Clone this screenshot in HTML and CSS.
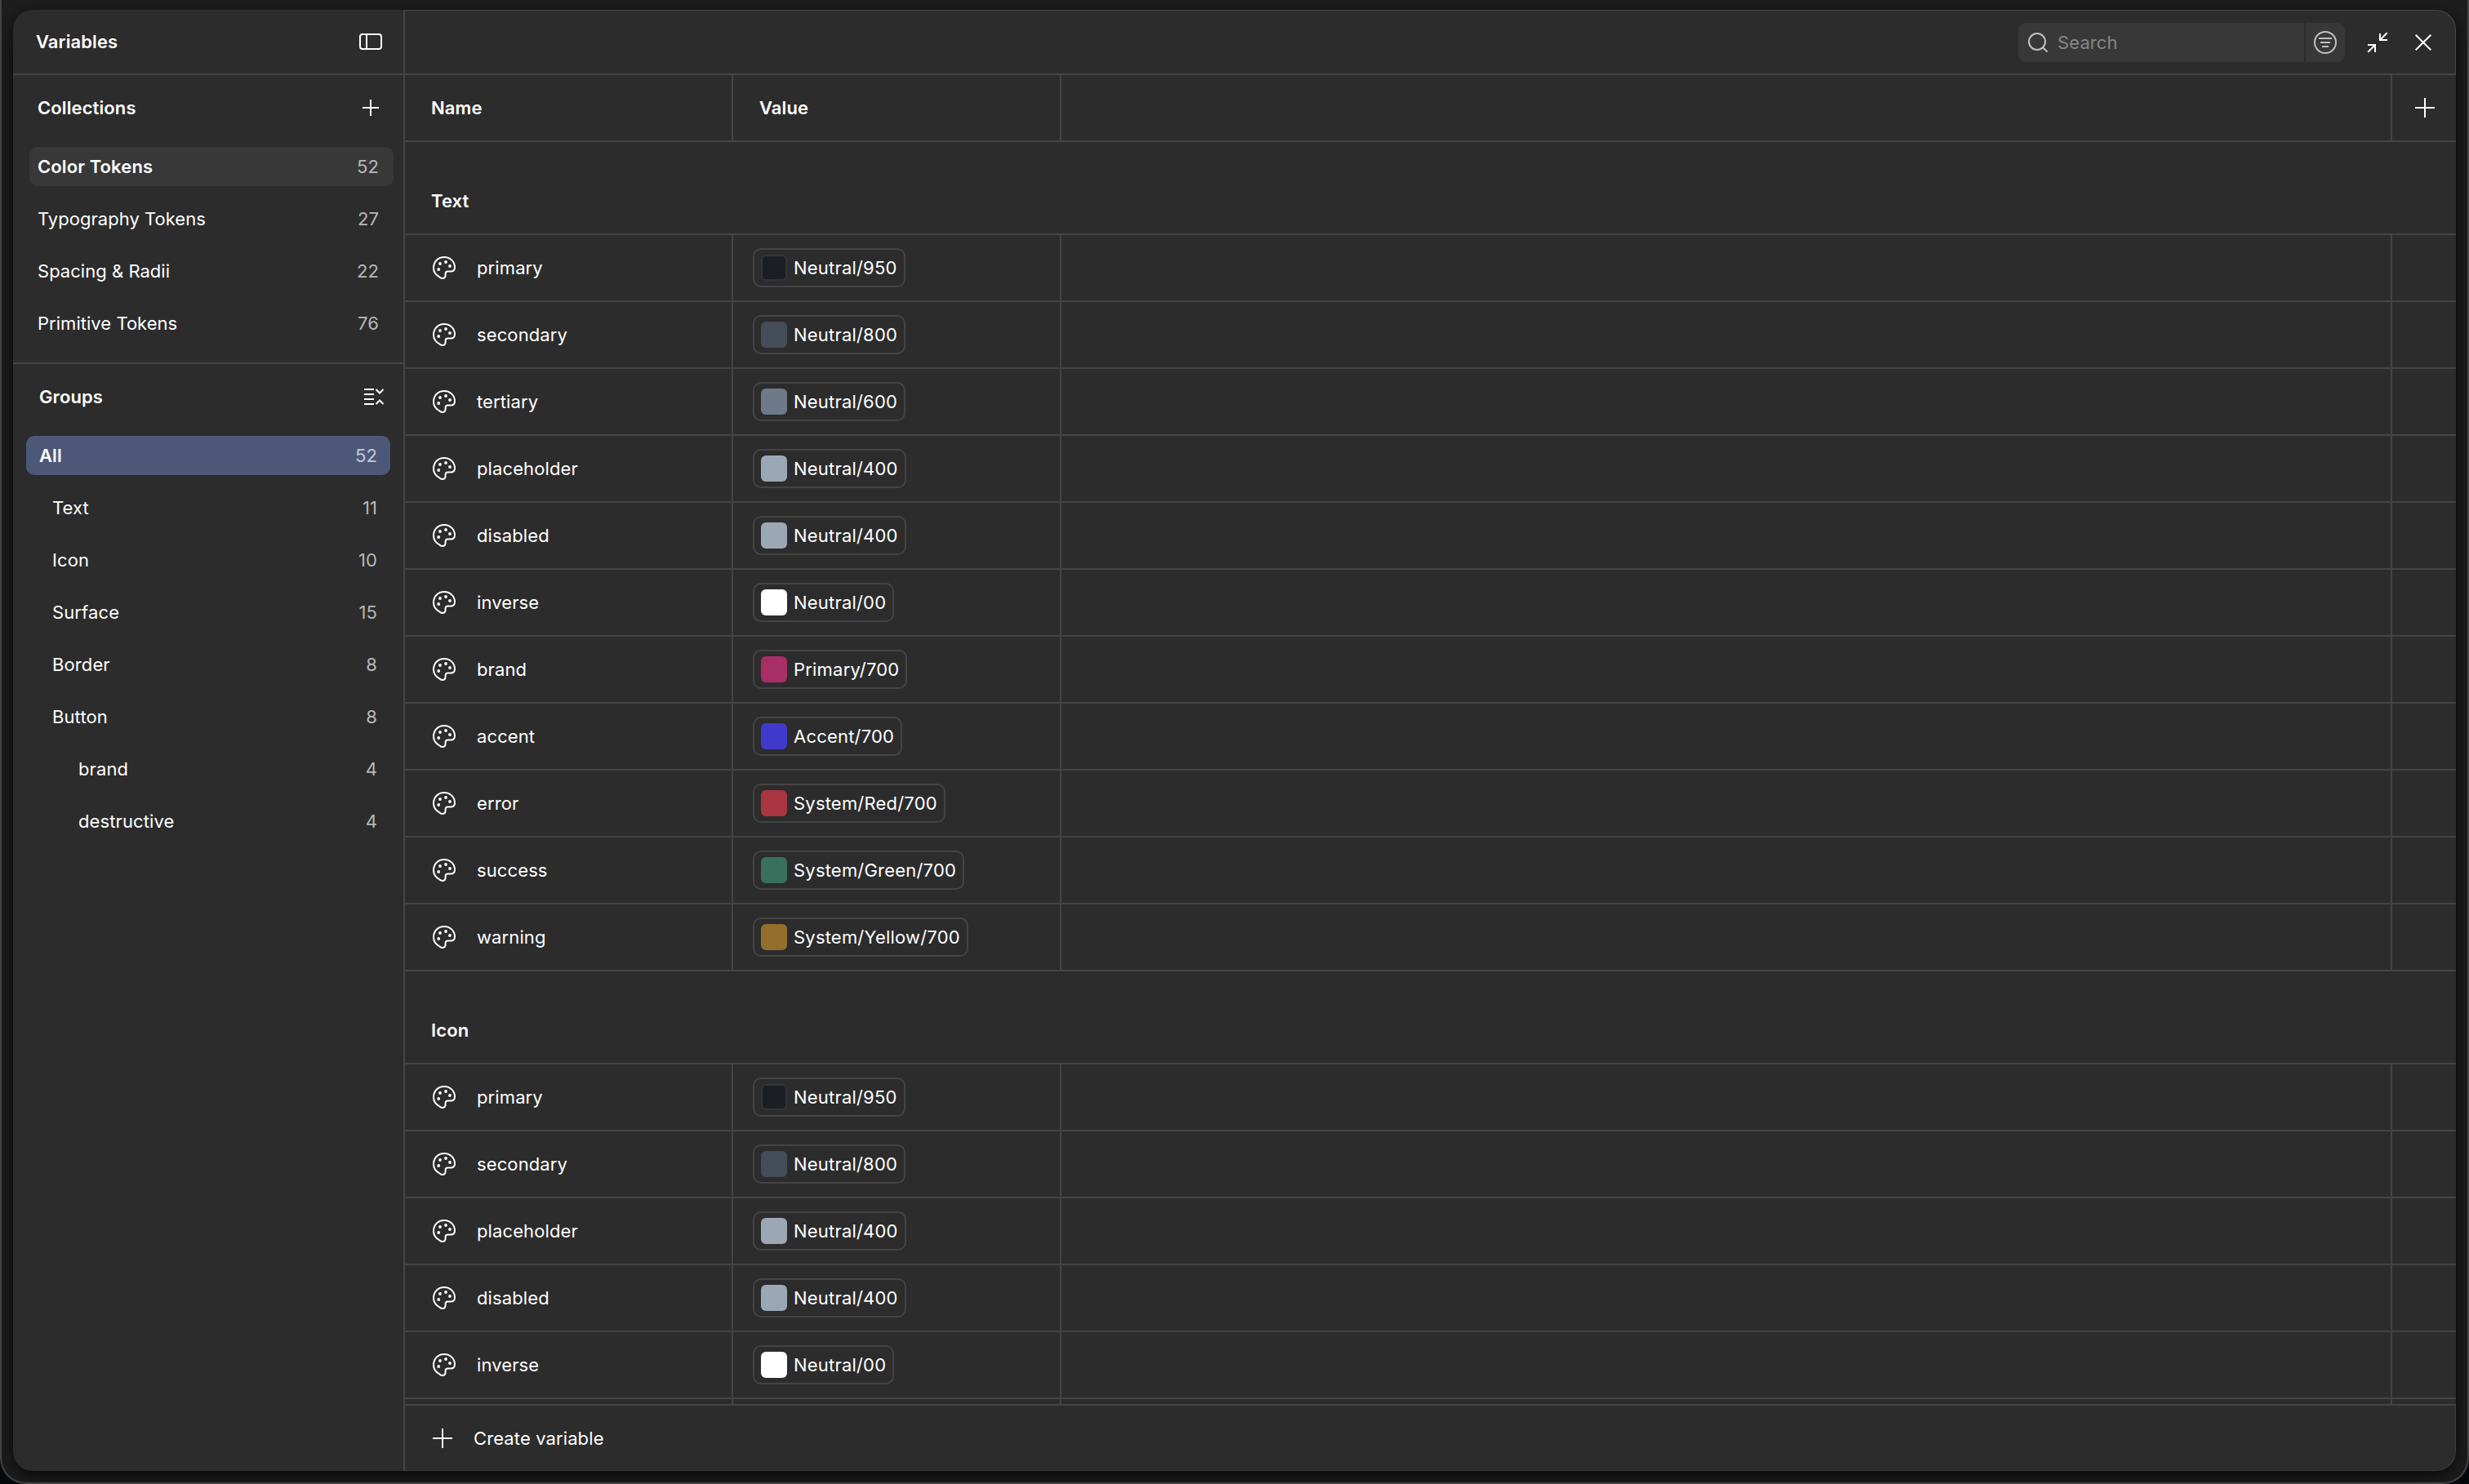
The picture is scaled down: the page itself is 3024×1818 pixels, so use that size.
FILE: index.html
```
<!DOCTYPE html>
<html lang="en">
<head>
<meta charset="utf-8">
<title>Variables</title>
<link rel="stylesheet" href="styles.css">
</head>
<body>
<svg class="defs" width="0" height="0" aria-hidden="true">
  <symbol id="plus" viewBox="0 0 24 24"><path d="M12 0v24M0 12h24"/></symbol>
  <symbol id="palette" viewBox="0 0 32 32">
    <path d="M13.8 29C12 29 10.800 28 9.800 27C4.500 24 3 20.500 3 16C3 8.500 8.500 3 16 3C23.500 3 29 8.500 29 15.500C29 19 26.500 20.500 24 20.500H20.500C18.500 20.500 17.600 21.500 17.600 23.500V25C17.600 27.500 16 29 13.800 29Z"/>
    <g class="dots"><circle cx="11" cy="11" r="1.900"/><circle cx="18" cy="9" r="1.900"/><circle cx="23" cy="14" r="1.900"/><circle cx="9.200" cy="18" r="1.900"/></g>
  </symbol>
</svg>
<div class="backdrop">
  <main class="modal">
    <aside class="sidebar">
      <header class="side-title"><h1>Variables</h1>
        <svg class="icon" width="28" height="20" viewBox="0 0 28 20"><rect x="1" y="1" width="26" height="18" rx="3"/><path d="M9 1v18"/></svg>
      </header>
      <section class="collections">
        <div class="side-head"><h2>Collections</h2><svg class="icon" width="20" height="20" viewBox="0 0 20 20"><path d="M10 0v20M0 10h20"/></svg></div>
        <ul>
          <li class="current"><span>Color Tokens</span><b>52</b></li>
          <li><span>Typography Tokens</span><b>27</b></li>
          <li><span>Spacing &amp; Radii</span><b>22</b></li>
          <li><span>Primitive Tokens</span><b>76</b></li>
        </ul>
      </section>
      <section class="groups">
        <div class="side-head"><h2>Groups</h2>
          <svg class="icon" width="24" height="20" viewBox="0 0 24 20"><path d="M0 1h12M0 7h12M0 13h12M0 19h12M14.500 1l4.500 4.500L23.500 1M14.500 19l4.500-4.500 4.500 4.500"/></svg>
        </div>
        <ul>
          <li class="current"><span>All</span><b>52</b></li>
          <li class="l1"><span>Text</span><b>11</b></li>
          <li class="l1"><span>Icon</span><b>10</b></li>
          <li class="l1"><span>Surface</span><b>15</b></li>
          <li class="l1"><span>Border</span><b>8</b></li>
          <li class="l1"><span>Button</span><b>8</b></li>
          <li class="l2"><span>brand</span><b>4</b></li>
          <li class="l2"><span>destructive</span><b>4</b></li>
        </ul>
      </section>
    </aside>
    <section class="content">
      <header class="toolbar">
        <div class="search">
          <div class="field">
            <svg class="icon muted" width="24" height="24" viewBox="0 0 24 24"><circle cx="11" cy="11" r="10"/><path d="M18.200 18.200l5.300 5.300"/></svg>
            <span>Search</span>
          </div>
          <div class="filter"><svg class="icon muted" width="28" height="28" viewBox="0 0 28 28"><circle cx="14" cy="14" r="13"/><path d="M6 9h16M8 14h12M10 19h8"/></svg></div>
        </div>
        <svg class="icon shrink" width="24" height="24" viewBox="0 0 24 24"><path d="M23.700.300L15 9M15 1v8h9M.300 23.700L9 15M0 15h9v9"/></svg>
        <svg class="icon close" width="20" height="20" viewBox="0 0 20 20"><path d="M.7.700l18.600 18.600M19.300.700L.700 19.300"/></svg>
      </header>
      <div class="row head"><div class="name">Name</div><div class="value">Value</div><div class="fill"></div><div class="add"><svg class="icon" width="24" height="24"><use href="#plus"/></svg></div></div>
      <div class="table" id="table"></div>
      <footer><svg class="icon" width="24" height="24"><use href="#plus"/></svg><span>Create variable</span></footer>
    </section>
  </main>
</div>
<script src="table.js"></script>
</body>
</html>
```
FILE: styles.css
```
* { box-sizing: border-box; }
body {
  margin: 0;
  background: #07080c;
  color: #fff;
  font: 400 22px/32px Inter, sans-serif;
  letter-spacing: 0.11px;
}
h1, h2, ul { margin: 0; padding: 0; font-size: 22px; font-weight: 600; line-height: 32px; }
ul { list-style: none; font-weight: 400; }
.defs { position: absolute; }
.icon { fill: none; stroke: #fff; stroke-width: 2; flex: none; overflow: visible; display: block; }
.muted { stroke: #c0c0c0; }
.backdrop {
  height: 1818px;
  padding: 12px 14px 14px;
  overflow: hidden;
  background: #1e1e1e;
  border: 2px solid #444;
  border-top: 0;
  border-radius: 0 0 32px 32px;
}
.modal {
  display: flex;
  height: 1790px;
  border-radius: 24px;
  overflow: hidden;
  background: #2c2c2c;
  box-shadow: 0 10px 32px rgba(0, 0, 0, .5), 0 4px 10px rgba(0, 0, 0, .3);
}
.sidebar { width: 480px; flex: none; border-right: 2px solid #444; }
.side-title { display: flex; justify-content: space-between; align-items: center; height: 80px; padding: 0 26px 0 28px; border-bottom: 2px solid #444; }
.side-head { display: flex; justify-content: space-between; align-items: center; height: 80px; padding: 0 30px; }
.collections { height: 354px; border-bottom: 2px solid #444; }
.collections ul { padding: 8px 12px 0 20px; }
.collections li:not(.current) span { letter-spacing: 0.03px; }
.groups .side-head { padding: 0 24px 0 32px; }
.groups ul { padding: 8px 16px 0; }
li { display: flex; justify-content: space-between; align-items: center; height: 48px; margin-bottom: 16px; border-radius: 10px; padding: 0 18px 0 10px; }
.groups li { padding-left: 16px; padding-right: 16px; }
.groups .l1 { padding-left: 32px; }
.groups .l2 { padding-left: 64px; }
li b { font-weight: 400; color: #b8b8b8; }
.current span { font-weight: 600; }
.collections .current { background: #383838; }
.groups .current { background: #4d5878; }
.groups .current b { color: #c5c9d3; }
.content { flex: 1; display: flex; flex-direction: column; min-width: 0; }
.toolbar {
  height: 80px;
  flex: none;
  display: flex;
  justify-content: flex-end;
  align-items: center;
  padding: 2px 30px 0 0;
  border-bottom: 2px solid #444;
  border-top-right-radius: 24px;
  box-shadow: inset -1px 1px #444;
}
.search { display: flex; gap: 2px; height: 48px; width: 400px; border-radius: 10px; overflow: hidden; }
.field { flex: 1; display: flex; align-items: center; gap: 12px; padding-left: 12px; background: #383838; color: #868686; }
.filter { width: 48px; display: grid; place-items: center; background: #383838; }
.shrink { margin-left: 28px; }
.close { margin-left: 34px; }
.row { display: flex; height: 82px; flex: none; border-bottom: 2px solid #444; }
.head { font-weight: 600; }
.row > div { display: flex; align-items: center; }
.name, .value { width: 402px; border-right: 2px solid #444; }
.name { padding-left: 32px; }
.row .name .icon { margin-right: 24px; }
.value { padding-left: 24px; }
.head .value { padding-left: 32px; }
.fill { flex: 1; }
.add { width: 80px; border-left: 2px solid #444; padding-left: 28px; }
.dots { fill: #fff; stroke: none; }
.table { flex: 1; overflow: hidden; }
.group { height: 114px; padding: 56px 32px 0; border-bottom: 2px solid #444; font-weight: 600; }
.chip { display: flex; align-items: center; gap: 8px; height: 48px; padding: 0 8px; border: 2px solid #444; border-radius: 10px; letter-spacing: 0.2px; }
.swatch { width: 32px; height: 32px; border-radius: 6px; }
.swatch.dark { box-shadow: inset 0 0 0 2px rgba(255, 255, 255, .1); }
footer {
  display: flex;
  align-items: center;
  gap: 26px;
  height: 82px;
  flex: none;
  border-top: 2px solid #444;
  border-bottom-right-radius: 24px;
  box-shadow: inset -1px -1px #3a3a3a;
  padding-left: 34px;
}
```
FILE: table.js
```
const groups = [
  ["Text", [
    ["primary", "Neutral/950", "#1b1f24", "dark"],
    ["secondary", "Neutral/800", "#454d58"],
    ["tertiary", "Neutral/600", "#6e7a89"],
    ["placeholder", "Neutral/400", "#9ba7b4"],
    ["disabled", "Neutral/400", "#9ba7b4"],
    ["inverse", "Neutral/00", "#ffffff"],
    ["brand", "Primary/700", "#a82f65"],
    ["accent", "Accent/700", "#3f3acc"],
    ["error", "System/Red/700", "#a93541"],
    ["success", "System/Green/700", "#38705e"],
    ["warning", "System/Yellow/700", "#946e2c"]
  ]],
  ["Icon", [
    ["primary", "Neutral/950", "#1b1f24", "dark"],
    ["secondary", "Neutral/800", "#454d58"],
    ["placeholder", "Neutral/400", "#9ba7b4"],
    ["disabled", "Neutral/400", "#9ba7b4"],
    ["inverse", "Neutral/00", "#ffffff"],
    ["", "", ""]
  ]]
];

const row = ([name, value, color, tone = ""]) => `
  <div class="row">
    <div class="name">${name ? `<svg class="icon" width="32" height="32"><use href="#palette"/></svg>${name}` : ""}</div>
    <div class="value">${value ? `<div class="chip"><span class="swatch ${tone}" style="background-color:${color}"></span>${value}</div>` : ""}</div>
    <div class="fill"></div>
    <div class="add"></div>
  </div>`;

document.getElementById("table").innerHTML = groups
  .map(([title, rows]) => `<div class="group">${title}</div>${rows.map(row).join("")}`)
  .join("");
```
